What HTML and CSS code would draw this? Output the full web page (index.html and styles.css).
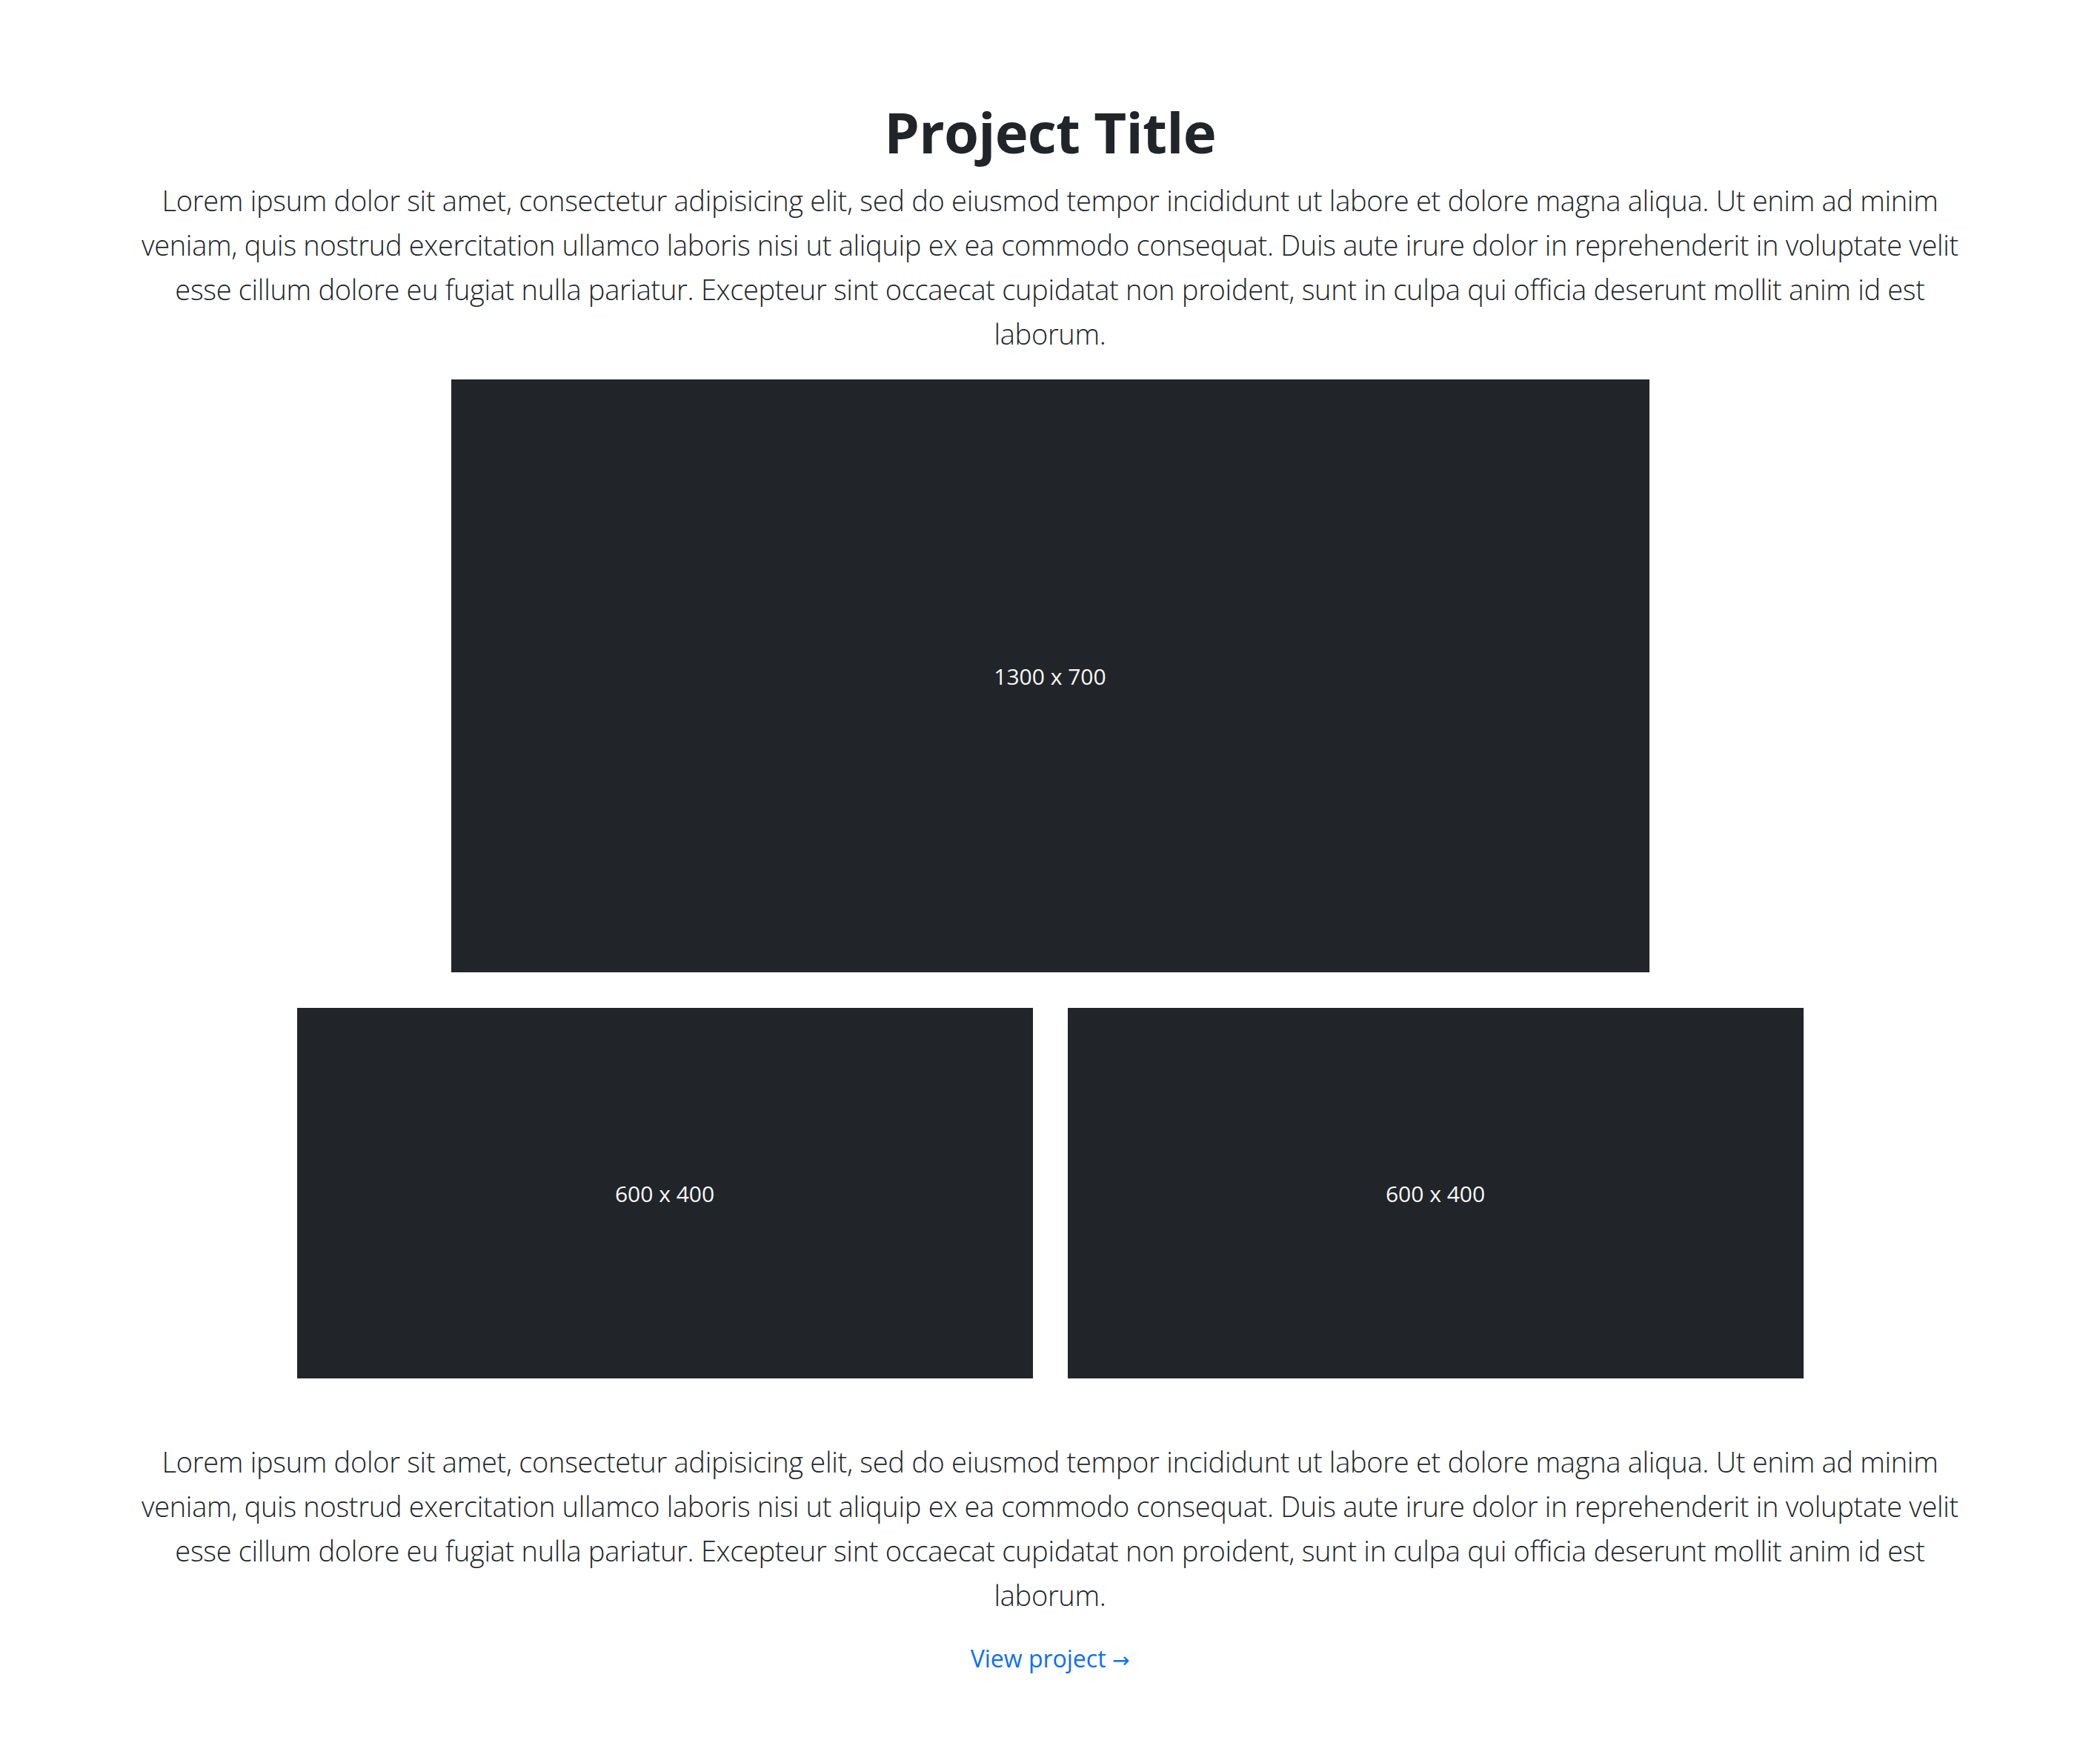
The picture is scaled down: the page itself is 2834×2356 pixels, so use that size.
FILE: index.html
```html
<!DOCTYPE html>
<html lang="en">
<head>
<meta charset="utf-8">
<title>Project Title</title>
<link rel="stylesheet" href="styles.css">
</head>
<body>
<main class="project">
  <h1 class="project-title">Project Title</h1>
  <p class="lead">Lorem ipsum dolor sit amet, consectetur adipisicing elit, sed do eiusmod tempor incididunt ut labore et dolore magna aliqua. Ut enim ad minim veniam, quis nostrud exercitation ullamco laboris nisi ut aliquip ex ea commodo consequat. Duis aute irure dolor in reprehenderit in voluptate velit esse cillum dolore eu fugiat nulla pariatur. Excepteur sint occaecat cupidatat non proident, sunt in culpa qui officia deserunt mollit anim id est laborum.</p>
  <div class="placeholder placeholder-large"><span>1300 x 700</span></div>
  <div class="gallery-row">
    <div class="placeholder placeholder-small"><span>600 x 400</span></div>
    <div class="placeholder placeholder-small"><span>600 x 400</span></div>
  </div>
  <p class="lead lead-bottom">Lorem ipsum dolor sit amet, consectetur adipisicing elit, sed do eiusmod tempor incididunt ut labore et dolore magna aliqua. Ut enim ad minim veniam, quis nostrud exercitation ullamco laboris nisi ut aliquip ex ea commodo consequat. Duis aute irure dolor in reprehenderit in voluptate velit esse cillum dolore eu fugiat nulla pariatur. Excepteur sint occaecat cupidatat non proident, sunt in culpa qui officia deserunt mollit anim id est laborum.</p>
  <a class="project-link" href="#">View project <span class="arrow">→</span></a>
</main>
</body>
</html>
```
FILE: styles.css
```css
html, body {
  margin: 0;
  padding: 0;
  background: #ffffff;
}

body {
  font-family: "Open Sans", "Noto Sans", "Liberation Sans", sans-serif;
  color: #212529;
}

.project {
  display: flex;
  flex-direction: column;
  align-items: center;
  padding-top: 130px;
  padding-bottom: 80px;
}

.project-title {
  margin: 0 0 14px;
  font-size: 76px;
  line-height: 96px;
  font-weight: 700;
  letter-spacing: -0.01em;
  color: #212529;
  text-align: center;
}

.lead {
  margin: 0 0 32px;
  width: 2475px;
  font-size: 38px;
  line-height: 60px;
  font-weight: 300;
  letter-spacing: -0.008em;
  text-align: center;
  color: #212529;
}

.lead-bottom {
  margin-top: 82px;
  margin-bottom: 32px;
}

.placeholder {
  display: flex;
  align-items: center;
  justify-content: center;
  background: #212529;
  color: #f8f9fa;
  font-size: 30px;
  line-height: 45px;
  font-weight: 400;
}

.placeholder-large {
  width: 1617px;
  height: 800px;
}

.gallery-row {
  display: flex;
  gap: 47px;
  margin-top: 48px;
}

.placeholder-small {
  width: 993px;
  height: 500px;
}

.project-link {
  font-size: 32px;
  line-height: 48px;
  color: #0d6efd;
  text-decoration: none;
}

.arrow {
  font-family: "DejaVu Sans", sans-serif;
  font-size: 28px;
}
```
